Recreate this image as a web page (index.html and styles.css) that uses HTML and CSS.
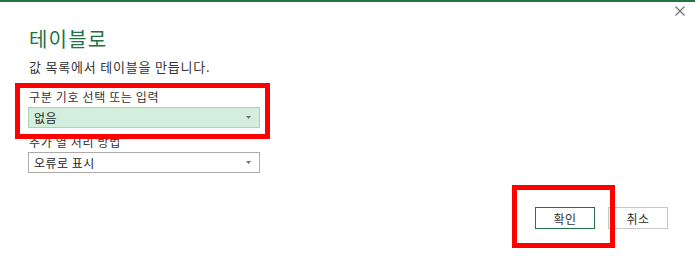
FILE: index.html
```html
<!DOCTYPE html>
<html>
<head>
    <title>테이블로</title>
    <link rel="stylesheet" href="styles.css">
</head>
<body>
    <div class="dialog">
        <div class="titlebar">
            <!-- 닫기 -->
            <svg class="close" width="10" height="10" viewBox="0 0 10 10">
                <path d="M0.5,0.5 L9.5,9.5 M9.5,0.5 L0.5,9.5" stroke="#6e6e6e" stroke-width="1.1" fill="none"/>
            </svg>
        </div>

        <div class="content">
            <h1 class="title">테이블로</h1>
            <p class="subtitle">값 목록에서 테이블을 만듭니다.</p>

            <div class="label">구분 기호 선택 또는 입력</div>
            <div class="select select-active">
                <span>없음</span>
                <svg width="5" height="3" viewBox="0 0 5 3"><path d="M0,0 L5,0 L2.5,3 Z" fill="#707070"/></svg>
            </div>

            <div class="label label-second">추가 열 처리 방법</div>
            <div class="select">
                <span>오류로 표시</span>
                <svg width="5" height="3" viewBox="0 0 5 3"><path d="M0,0 L5,0 L2.5,3 Z" fill="#707070"/></svg>
            </div>

            <div class="footer">
                <button class="btn btn-primary">확인</button>
                <button class="btn">취소</button>
            </div>
        </div>

        <!-- 강조 표시 -->
        <div class="mark mark-field"></div>
        <div class="mark mark-ok"></div>
    </div>
</body>
</html>
```

FILE: styles.css
```css
body {
    margin: 0;
    background: #ffffff;
    font-family: "Noto Sans CJK KR", "Noto Sans", sans-serif;
    color: #333333;
}
.dialog {
    position: relative;
    height: 254px;
    border-top: 2px solid #217346;
    background: #ffffff;
    overflow: hidden;
}
.titlebar {
    display: flex;
    justify-content: flex-end;
    height: 14px;
    padding: 4px 10px 0 0;
}
.close {
    display: block;
}
.content {
    padding-left: 28px;
}
.title {
    margin: 7px 0 0 1px;
    font-size: 20px;
    line-height: 24px;
    font-weight: normal;
    letter-spacing: 1.2px;
    color: #217346;
}
.subtitle {
    margin: 7px 0 0 1px;
    font-size: 13px;
    line-height: 17px;
    letter-spacing: 0.8px;
    color: #333333;
}
.label {
    margin: 14px 0 0 1px;
    font-size: 12px;
    line-height: 16px;
    letter-spacing: 0.65px;
    color: #333333;
}
.label-second {
    margin-top: 6px;
}
.select {
    box-sizing: border-box;
    width: 232px;
    height: 21px;
    margin-top: 2px;
    padding: 0 8px 0 5px;
    border: 1px solid #ababab;
    background: #ffffff;
    display: flex;
    align-items: center;
    justify-content: space-between;
    font-size: 12px;
    letter-spacing: 0.5px;
    color: #262626;
}
.select-active {
    background: #d3eedd;
    border-color: #a6d4b6;
}
.footer {
    display: flex;
    justify-content: flex-end;
    gap: 13px;
    margin-top: 34px;
    padding-right: 27px;
}
.btn {
    box-sizing: border-box;
    width: 60px;
    height: 22px;
    padding: 0;
    border: 1px solid #c6c6c6;
    background: #ffffff;
    font-family: "Noto Sans CJK KR", "Noto Sans", sans-serif;
    font-size: 12px;
    letter-spacing: 0.5px;
    color: #333333;
}
.btn-primary {
    border-color: #217346;
}
.mark {
    position: absolute;
    box-sizing: border-box;
    border: 5px solid #ff0000;
}
.mark-field {
    left: 15px;
    top: 81px;
    width: 255px;
    height: 56px;
}
.mark-ok {
    left: 512px;
    top: 183px;
    width: 103px;
    height: 63px;
}
```
